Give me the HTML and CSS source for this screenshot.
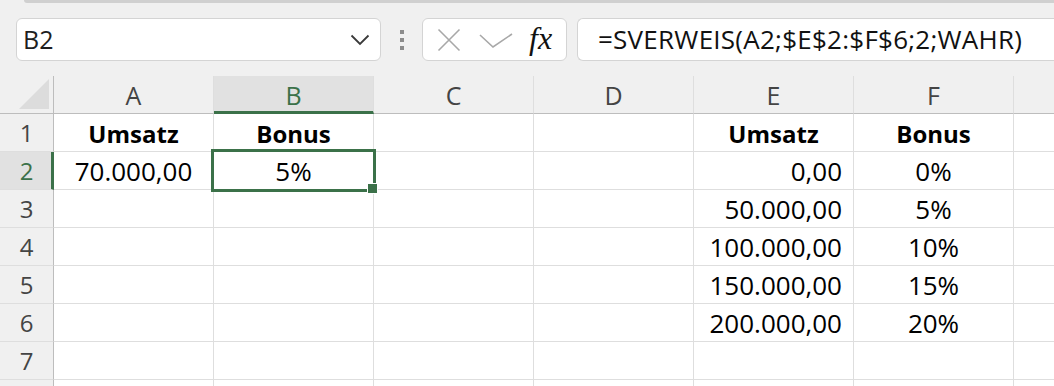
FILE: index.html
```html
<!DOCTYPE html>
<html lang="de">
<head>
<meta charset="utf-8">
<title>SVERWEIS</title>
<link rel="stylesheet" href="styles.css">
</head>
<body>
<div class="app">
  <div class="ribbon-edge"></div>
  <div class="formula-bar">
    <div class="namebox">
      <span class="name">B2</span>
      <svg class="chevron" width="20" height="12" viewBox="0 0 20 12"><path d="M1.5 1.5 L10 10 L18.5 1.5" fill="none" stroke="#3a3a3a" stroke-width="1.8"/></svg>
    </div>
    <div class="dots"><i></i><i></i><i></i></div>
    <div class="fxbox">
      <svg class="ico-x" width="24" height="24" viewBox="0 0 24 24"><path d="M1.5 1.5 L22.5 22.5 M22.5 1.5 L1.5 22.5" stroke="#a8a8a8" stroke-width="1.6" fill="none"/></svg>
      <svg class="ico-check" width="34" height="16" viewBox="0 0 34 16"><path d="M1 2 L14 14 L33 1" stroke="#a8a8a8" stroke-width="1.6" fill="none"/></svg>
      <span class="fx">fx</span>
    </div>
    <div class="formula">=SVERWEIS(A2;$E$2:$F$6;2;WAHR)</div>
  </div>

  <div class="sheet">
    <div class="grid">
      <div class="corner"><svg width="32" height="32" viewBox="0 0 32 32"><polygon points="31,1 31,31 1,31" fill="#dcdcdc"/></svg></div>
      <div class="ch">A</div>
      <div class="ch sel">B</div>
      <div class="ch">C</div>
      <div class="ch">D</div>
      <div class="ch">E</div>
      <div class="ch">F</div>
      <div class="ch last"></div>

      <div class="rh">1</div>
      <div class="c center bold">Umsatz</div>
      <div class="c center bold">Bonus</div>
      <div class="c"></div>
      <div class="c"></div>
      <div class="c center bold">Umsatz</div>
      <div class="c center bold">Bonus</div>
      <div class="c"></div>

      <div class="rh sel">2</div>
      <div class="c center">70.000,00</div>
      <div class="c center">5%</div>
      <div class="c"></div>
      <div class="c"></div>
      <div class="c right">0,00</div>
      <div class="c center">0%</div>
      <div class="c"></div>

      <div class="rh">3</div>
      <div class="c"></div>
      <div class="c"></div>
      <div class="c"></div>
      <div class="c"></div>
      <div class="c right">50.000,00</div>
      <div class="c center">5%</div>
      <div class="c"></div>

      <div class="rh">4</div>
      <div class="c"></div>
      <div class="c"></div>
      <div class="c"></div>
      <div class="c"></div>
      <div class="c right">100.000,00</div>
      <div class="c center">10%</div>
      <div class="c"></div>

      <div class="rh">5</div>
      <div class="c"></div>
      <div class="c"></div>
      <div class="c"></div>
      <div class="c"></div>
      <div class="c right">150.000,00</div>
      <div class="c center">15%</div>
      <div class="c"></div>

      <div class="rh">6</div>
      <div class="c"></div>
      <div class="c"></div>
      <div class="c"></div>
      <div class="c"></div>
      <div class="c right">200.000,00</div>
      <div class="c center">20%</div>
      <div class="c"></div>

      <div class="rh">7</div>
      <div class="c"></div>
      <div class="c"></div>
      <div class="c"></div>
      <div class="c"></div>
      <div class="c"></div>
      <div class="c"></div>
      <div class="c"></div>

      <div class="rh"></div>
      <div class="c"></div>
      <div class="c"></div>
      <div class="c"></div>
      <div class="c"></div>
      <div class="c"></div>
      <div class="c"></div>
      <div class="c"></div>
    </div>
    <div class="selection"></div>
    <div class="handle"></div>
  </div>
</div>
</body>
</html>
```

FILE: styles.css
```css
* { box-sizing: border-box; }

html, body {
  margin: 0;
  padding: 0;
  height: 100%;
  overflow: hidden;
}

body {
  background: #f0f0f0;
  font-family: "Open Sans", "Noto Sans", sans-serif;
  color: #000;
}

.app {
  width: 1054px;
  height: 386px;
  overflow: hidden;
}

.ribbon-edge {
  height: 3px;
  margin-left: 24px;
  background: #d0d0d0;
  border-bottom-left-radius: 6px;
}

.formula-bar {
  display: flex;
  align-items: center;
  height: 73px;
  padding: 15px 0 15px 16px;
}

.namebox {
  width: 365px;
  height: 43px;
  flex: none;
  display: flex;
  align-items: center;
  justify-content: space-between;
  padding: 0 10px 0 6px;
  background: #fff;
  border: 1px solid #d4d4d4;
  border-radius: 6px;
  font-size: 25px;
  color: #1e1e1e;
}

.name { line-height: 1; }

.chevron { display: block; }

.dots {
  width: 4px;
  margin: 0 18px 0 19px;
  display: flex;
  flex-direction: column;
  gap: 4px;
  flex: none;
}

.dots i {
  display: block;
  width: 4px;
  height: 4px;
  background: #8c8c8c;
}

.fxbox {
  width: 145px;
  height: 43px;
  flex: none;
  display: flex;
  align-items: center;
  padding-left: 14px;
  background: #fff;
  border: 1px solid #d4d4d4;
  border-radius: 6px;
}

.ico-x { display: block; margin-top: 1px; }

.ico-check { display: block; margin-left: 18px; margin-top: 2px; }

.fx {
  margin-left: 16px;
  font-family: "Liberation Serif", "DejaVu Serif", serif;
  font-style: italic;
  font-size: 32px;
  line-height: 1;
  color: #111;
  margin-top: -3px;
}

.formula {
  flex: none;
  width: 520px;
  height: 43px;
  margin-left: 10px;
  padding-left: 20px;
  background: #fff;
  border: 1px solid #d4d4d4;
  border-right: none;
  border-radius: 6px 0 0 6px;
  font-size: 26px;
  letter-spacing: 0.25px;
  line-height: 41px;
  color: #111;
  white-space: nowrap;
}

.sheet {
  position: relative;
}

.grid {
  display: grid;
  grid-template-columns: 54px repeat(6, 160px) 40px;
  grid-auto-rows: 38px;
  background: #fff;
}

.corner {
  background: #f0f0f0;
  border-right: 1px solid #bdbdbd;
  border-bottom: 1px solid #bdbdbd;
  display: flex;
  align-items: flex-end;
  justify-content: flex-end;
  padding: 0 3px 3px 0;
}

.corner svg { display: block; }

.ch {
  background: #f0f0f0;
  border-right: 1px solid #dedede;
  border-bottom: 1px solid #bdbdbd;
  text-align: center;
  font-size: 25px;
  line-height: 37px;
  padding-top: 1px;
  color: #444;
}

.ch.last { border-right: none; }

.ch.sel {
  background: #e1e1e1;
  border-bottom: 3px solid #3b7149;
  color: #3b7149;
}

.rh {
  background: #f0f0f0;
  border-right: 1px solid #bdbdbd;
  border-bottom: 1px solid #dedede;
  text-align: center;
  font-size: 24px;
  line-height: 37px;
  color: #444;
}

.rh.sel {
  background: #e1e1e1;
  border-right: 3px solid #3b7149;
  color: #3b7149;
  padding-left: 2px;
}

.c {
  border-right: 1px solid #dedede;
  border-bottom: 1px solid #dedede;
  font-size: 26px;
  line-height: 37px;
  padding-top: 1px;
  white-space: nowrap;
  overflow: hidden;
}

.c:nth-child(8n) { border-right: none; }

.center { text-align: center; }

.right { text-align: right; padding-right: 11px; }

.bold { font-weight: 700; font-size: 24px; }

.selection {
  position: absolute;
  left: 211px;
  top: 73px;
  width: 165px;
  height: 43px;
  border: 3px solid #3b7149;
  pointer-events: none;
}

.handle {
  position: absolute;
  left: 367px;
  top: 107px;
  width: 11px;
  height: 11px;
  background: #3b7149;
  border: 1px solid #fff;
}
```
